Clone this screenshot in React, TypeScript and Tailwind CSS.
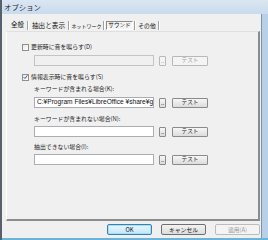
import { type ReactNode } from 'react'

const jp = { fontFamily: '"Noto Sans CJK JP", "Liberation Sans", sans-serif' }

function CheckBox({ checked }: { checked?: boolean }) {
  return (
    <span className="flex h-[7px] w-[7px] items-center justify-center border border-[#8f8f8f] bg-gradient-to-br from-[#e8e8e8] to-white">
      {checked ? (
        <svg width="6" height="6" viewBox="0 0 6 6">
          <path d="M0.8 3.2 L2.4 4.8 L5.3 1" fill="none" stroke="#3c5a82" strokeWidth="1.2" />
        </svg>
      ) : null}
    </span>
  )
}

function SmallButton({ children, disabled, wide }: { children?: ReactNode; disabled?: boolean; wide?: boolean }) {
  return (
    <div
      className={
        'flex h-[10px] items-center justify-center rounded-[1px] border bg-gradient-to-b text-[5.6px] leading-none ' +
        (wide ? 'w-[36px] ' : 'w-[7px] ') +
        (disabled
          ? 'border-[#b8b8b8] from-[#f4f4f4] to-[#f4f4f4] text-[#9a9a9a]'
          : 'border-[#8a8a8a] from-[#f6f6f6] to-[#dcdcdc] text-[#222]')
      }
    >
      {children}
    </div>
  )
}

function FieldRow({ value, disabled }: { value?: string; disabled?: boolean }) {
  return (
    <div className="ml-[27px] flex items-center">
      <div
        className={
          'flex h-[11px] w-[120px] items-center overflow-hidden whitespace-nowrap border px-[2px] text-[6.6px] leading-none text-[#111] ' +
          (disabled ? 'border-[#c4c4c4] bg-[#f0f0f0]' : 'border-[#abadb3] bg-white')
        }
        style={{ fontFamily: '"Liberation Sans", "Noto Sans CJK JP", sans-serif' }}
      >
        {value}
      </div>
      <div className="ml-[5px]">
        <SmallButton disabled={disabled}>
          <span className="mt-[3px]">..</span>
        </SmallButton>
      </div>
      <div className="ml-[6px]">
        <SmallButton wide disabled={disabled}>テスト</SmallButton>
      </div>
    </div>
  )
}

function Label({ children, top }: { children: ReactNode; top: string }) {
  return <div className={'ml-[27px] h-[8px] text-[5.9px] leading-[8px] text-[#222] ' + top}>{children}</div>
}

const tabs = [
  { label: '全般', w: 'w-[17px]', size: 'text-[6.4px]' },
  { label: '抽出と表示', w: 'w-[37px]', size: 'text-[6.6px]' },
  { label: 'ネットワーク', w: 'w-[31px]', size: 'text-[5px]' },
  { label: 'サウンド', w: 'w-[27px]', size: 'text-[5.6px]', active: true },
  { label: 'その他', w: 'w-[20px]', size: 'text-[5.8px]' },
]

export default function App() {
  return (
    <div className="flex h-[240px] w-[268px] flex-col overflow-hidden border-l-2 border-[#56616c] bg-[#b9d1e8]" style={jp}>
      <div className="flex h-[14px] shrink-0 items-center bg-gradient-to-b from-[#dbe6f1] to-[#c8dbee] pl-[2px] text-[7.4px] text-[#1e2a38]">
        オプション
      </div>
      <div className="mr-[6px] flex flex-1 flex-col border-r border-[#7f93a8] bg-[#f0f0f0]">
        <div className="ml-[7px] mt-[6px] flex h-[11px] items-center leading-none text-[#111]">
          {tabs.map((t) => (
            <div key={t.label} className="flex items-center">
              <div
                className={
                  'flex h-[9px] items-center justify-center whitespace-nowrap ' +
                  t.w +
                  ' ' +
                  t.size +
                  (t.active ? ' border border-t-[#8a8a8a] border-l-[#8a8a8a] border-r-white border-b-white bg-[#f4f4f4]' : '')
                }
              >
                {t.label}
              </div>
              <div className="mx-[1px] h-[9px] w-[2px] border-l border-r border-l-[#a0a0a0] border-r-white" />
            </div>
          ))}
        </div>
        <div className="ml-[4px] mr-[1px] flex h-[190px] flex-col border border-b-2 border-r-2 border-l-white border-t-[#e0e0e0] border-r-[#8c8c8c] border-b-[#8c8c8c]">
          <div className="ml-[15px] mt-[11px] flex h-[8px] items-center gap-[2px] text-[5.9px] text-[#222]">
            <CheckBox />
            <span>更新時に音を鳴らす(D)</span>
          </div>
          <div className="mt-[4px]">
            <FieldRow disabled />
          </div>
          <div className="ml-[15px] mt-[7px] flex h-[8px] items-center gap-[2px] text-[5.9px] text-[#222]">
            <CheckBox checked />
            <span>情報表示時に音を鳴らす(S)</span>
          </div>
          <Label top="mt-[4px]">キーワードが含まれる場合(K):</Label>
          <div className="mt-[4px]">
            <FieldRow value="C:¥Program Files¥LibreOffice ¥share¥g" />
          </div>
          <Label top="mt-[7px]">キーワードが含まれない場合(N):</Label>
          <div className="mt-[3px]">
            <FieldRow />
          </div>
          <Label top="mt-[6px]">抽出できない場合(I):</Label>
          <div className="mt-[3px]">
            <FieldRow />
          </div>
        </div>
        <div className="mt-[3px] flex h-[11px] justify-end gap-[9px] pr-[1px] text-[5.8px] leading-none">
          <div className="flex w-[45px] items-center justify-center rounded-[2px] border border-[#3c7fb1] bg-gradient-to-b from-[#eaf6fd] to-[#bee6fd] text-[#111] shadow-[inset_0_0_0_1px_#a6dff8]">
            OK
          </div>
          <div className="flex w-[45px] items-center justify-center rounded-[2px] border border-[#707070] bg-gradient-to-b from-[#f2f2f2] to-[#dddddd] text-[#111]">
            キャンセル
          </div>
          <div className="flex w-[45px] items-center justify-center rounded-[2px] border border-[#bcbcbc] bg-[#f4f4f4] text-[#9a9a9a]">
            適用(A)
          </div>
        </div>
        <div className="h-[3px]" />
      </div>
      <div className="h-[3px] shrink-0 bg-[#6bb3d8]" />
    </div>
  )
}
